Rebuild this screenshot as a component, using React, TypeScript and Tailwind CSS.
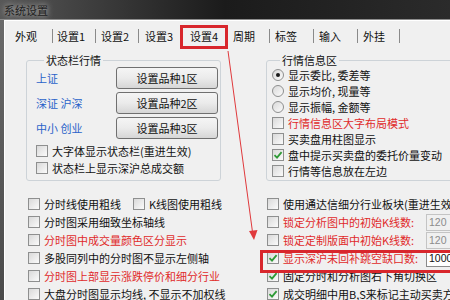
import React from 'react';

type BoxProps = { checked?: boolean };

function Check({ checked = false }: BoxProps) {
  return (
    <span className="w-[12px] h-[12px] shrink-0 border border-[#8e8f8f] bg-linear-to-br from-[#d9d9d9] to-[#fbfbfb] flex items-center justify-center">
      {checked && (
        <svg width="10" height="10" viewBox="0 0 10 10">
          <path d="M1.5 5.2 L4 7.6 L8.6 2.2" fill="none" stroke="#2e9a36" strokeWidth="1.8" />
        </svg>
      )}
    </span>
  );
}

function Radio({ checked = false }: BoxProps) {
  return (
    <span className="w-[12px] h-[12px] shrink-0 rounded-full border border-[#8e8f8f] bg-linear-to-br from-[#d9d9d9] to-[#fbfbfb] flex items-center justify-center">
      {checked && <span className="w-[4px] h-[4px] rounded-full bg-[#1a1a1a]" />}
    </span>
  );
}

interface RowProps {
  label: string;
  checked?: boolean;
  red?: boolean;
  radio?: boolean;
  h?: string;
}

function Row({ label, checked, red, radio, h = 'h-[18px]' }: RowProps) {
  return (
    <div className={`flex items-center ${h} shrink-0`}>
      {radio ? <Radio checked={checked} /> : <Check checked={checked} />}
      <span className={`ml-[4px] shrink-0 whitespace-nowrap ${red ? 'text-[#e02a2a]' : 'text-[#111]'}`}>{label}</span>
    </div>
  );
}

function NumRow({ label, value, checked, enabled }: { label: string; value: string; checked?: boolean; enabled?: boolean }) {
  return (
    <div className="flex items-center h-[18px] shrink-0">
      <Check checked={checked} />
      <span className="ml-[4px] w-[143px] shrink-0 whitespace-nowrap text-[#e02a2a]">{label}</span>
      <span
        className={`w-[50px] h-[17px] shrink-0 pl-[2px] leading-[15px] border text-[10.5px] font-['Liberation_Sans',sans-serif] ${
          enabled ? 'border-[#8a8a8a] bg-white text-[#111]' : 'border-[#c4c4c4] bg-[#f0f0f0] text-[#8c8c8c]'
        }`}
      >
        {value}
      </span>
    </div>
  );
}

const tabs = [
  { name: '外观', w: 'w-[41px] pl-[3px]' },
  { name: '设置1', w: 'w-[43px] pl-[4px]' },
  { name: '设置2', w: 'w-[43px] pl-[5px]' },
  { name: '设置3', w: 'w-[41px] pl-[6px] border-r-0' },
];

const tabs2 = [
  { name: '周期', w: 'w-[42px] pl-[5px]' },
  { name: '标签', w: 'w-[44px] pl-[5px]' },
  { name: '输入', w: 'w-[44px] pl-[5px]' },
  { name: '外挂', w: 'w-[42px] pl-[5px]' },
];

export default function App() {
  return (
    <div className="relative w-[450px] h-[300px] overflow-hidden bg-[#f0f0f0] text-[11px] leading-[14px] font-['Noto_Sans_CJK_SC','Noto_Sans',sans-serif]">
      {/* 标题栏 */}
      <div className="h-[19px] flex items-center pl-[4px] bg-linear-to-r from-[#585858] via-[#1b1b1b] to-[#2b2b2b]">
        <span className="text-[#1e1e1e] [text-shadow:0_0_6px_rgba(235,235,235,0.95)]">系统设置</span>
      </div>

      <div className="flex h-[281px] border-t border-[#8d8d8d]">
        <div className="w-[4px] shrink-0 bg-linear-to-b from-[#6a6a6a] to-[#4a4a4a]" />
        <div className="flex-1 flex flex-col border-l border-t border-white bg-[#f0f0f0]">
          {/* 标签页 */}
          <div className="flex items-start h-[28px] pl-[7px] shrink-0">
            {tabs.map((t) => (
              <div key={t.name} className={`mt-[8px] h-[14px] flex items-center border-r border-[#8a8a8a] text-[#111] ${t.w}`}>
                {t.name}
              </div>
            ))}
            <div className="mt-[4px] h-[24px] w-[48px] pl-[7px] pt-[1px] border-[3px] border-[#d8262c] text-[#111]">设置4</div>
            {tabs2.map((t) => (
              <div key={t.name} className={`mt-[8px] h-[14px] flex items-center border-r border-[#8a8a8a] text-[#111] ${t.w}`}>
                {t.name}
              </div>
            ))}
          </div>

          {/* 分组框 */}
          <div className="flex mt-[4px] shrink-0">
            <fieldset className="ml-[21px] w-[195px] shrink-0 border border-[#cdd3d8] rounded-[3px] pl-[9px] pb-[4px]">
              <legend className="ml-[8px] px-[2px] text-[#111]">状态栏行情</legend>
              <div className="flex flex-col gap-[3px]">
                {['上证', '深证 沪深', '中小 创业'].map((l, i) => (
                  <div key={l} className="flex items-center h-[22px]">
                    <span className="w-[80px] text-[#2a63c9]">{l}</span>
                    <div className="w-[102px] h-[22px] flex items-center justify-center border border-[#707070] rounded-[3px] bg-linear-to-b from-[#f5f5f5] via-[#ebebeb] to-[#d6d6d6] text-[#111]">
                      设置品种{i + 1}区
                    </div>
                  </div>
                ))}
              </div>
              <div className="mt-[3px] flex flex-col">
                <Row label="大字体显示状态栏(重进生效)" h="h-[17px]" />
                <Row label="状态栏上显示深沪总成交额" h="h-[17px]" />
              </div>
            </fieldset>

            <fieldset className="ml-[45px] w-[200px] shrink-0 border border-[#cdd3d8] rounded-[3px] pl-[5px] pb-[1px]">
              <legend className="ml-[8px] px-[2px] text-[#111]">行情信息区</legend>
              <div className="flex flex-col">
                <Row radio checked label="显示委比, 委差等" h="h-[16px]" />
                <Row radio label="显示均价, 现量等" h="h-[16px]" />
                <Row radio label="显示振幅, 金额等" h="h-[16px]" />
                <Row red label="行情信息区大字布局模式" h="h-[16px]" />
                <Row label="买卖盘用柱图显示" h="h-[16px]" />
                <Row checked label="盘中提示买卖盘的委托价量变动" h="h-[16px]" />
                <Row label="行情等信息放在左边" h="h-[16px]" />
              </div>
            </fieldset>
          </div>

          {/* 下部选项 */}
          <div className="flex mt-[14px] pl-[23px] shrink-0">
            <div className="w-[239px] shrink-0 flex flex-col">
              <div className="flex items-center h-[18px]">
                <div className="w-[105px] shrink-0">
                  <Row label="分时线使用粗线" />
                </div>
                <Row label="K线图使用粗线" />
              </div>
              <Row label="分时图采用细致坐标轴线" />
              <Row red label="分时图中成交量颜色区分显示" />
              <Row label="多股同列中的分时图不显示左侧轴" />
              <Row red label="分时图上部显示涨跌停价和细分行业" />
              <Row label="大盘分时图显示均线, 不显示不加权线" />
            </div>
            <div className="w-[200px] shrink-0 flex flex-col">
              <Row label="使用通达信细分行业板块(重进生效)" />
              <NumRow label="锁定分析图中的初始K线数:" value="120" />
              <NumRow label="锁定定制版面中初始K线数:" value="120" />
              <NumRow label="显示深沪未回补跳空缺口数:" value="1000" checked enabled />
              <Row checked label="固定分时和分析图右下角切换区" />
              <Row checked label="成交明细中用B,S来标记主动买卖方" />
            </div>
          </div>
        </div>
      </div>

      {/* 标注 */}
      <div className="absolute left-[260px] top-[250px] w-[194px] h-[23px] border-[3px] border-[#d8262c] pointer-events-none" />
      <svg className="absolute left-0 top-0 pointer-events-none" width="450" height="300">
        <line x1="228" y1="51" x2="252.5" y2="232" stroke="#e0393c" strokeWidth="1" />
        <path d="M249 231 L257.5 230 L254 240 Z" fill="#e0393c" />
      </svg>
    </div>
  );
}
